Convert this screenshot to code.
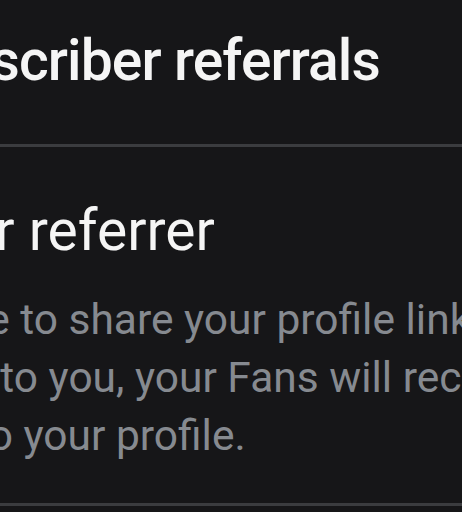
export default function App() {
  return (
    <div className="w-[462px] h-[512px] overflow-hidden bg-[#161618] font-['Roboto',sans-serif]">
      <div className="-ml-[101px] w-[800px] pt-[32px]">
        <h1 className="-ml-[4px] text-[57px] leading-[57px] font-medium tracking-[-0.9px] text-[#f5f5f5] whitespace-nowrap">Subscriber referrals</h1>
        <div className="mt-[55px] h-[3px] bg-[#3b3c3f]" />
        <h2 className="mt-[55px] text-[57px] leading-[57px] font-normal text-[#f5f5f5] whitespace-nowrap">Your referrer</h2>
        <p className="mt-[32px] text-[42.5px] leading-[58px] text-[#868a90] whitespace-nowrap">
          Agree to share your profile link with creators who
          <br />
          back to you, your Fans will receive a discount on
          <br />
          link to your profile.
        </p>
        <div className="mt-[38px] h-[3px] bg-[#3b3c3f]" />
      </div>
    </div>
  );
}
